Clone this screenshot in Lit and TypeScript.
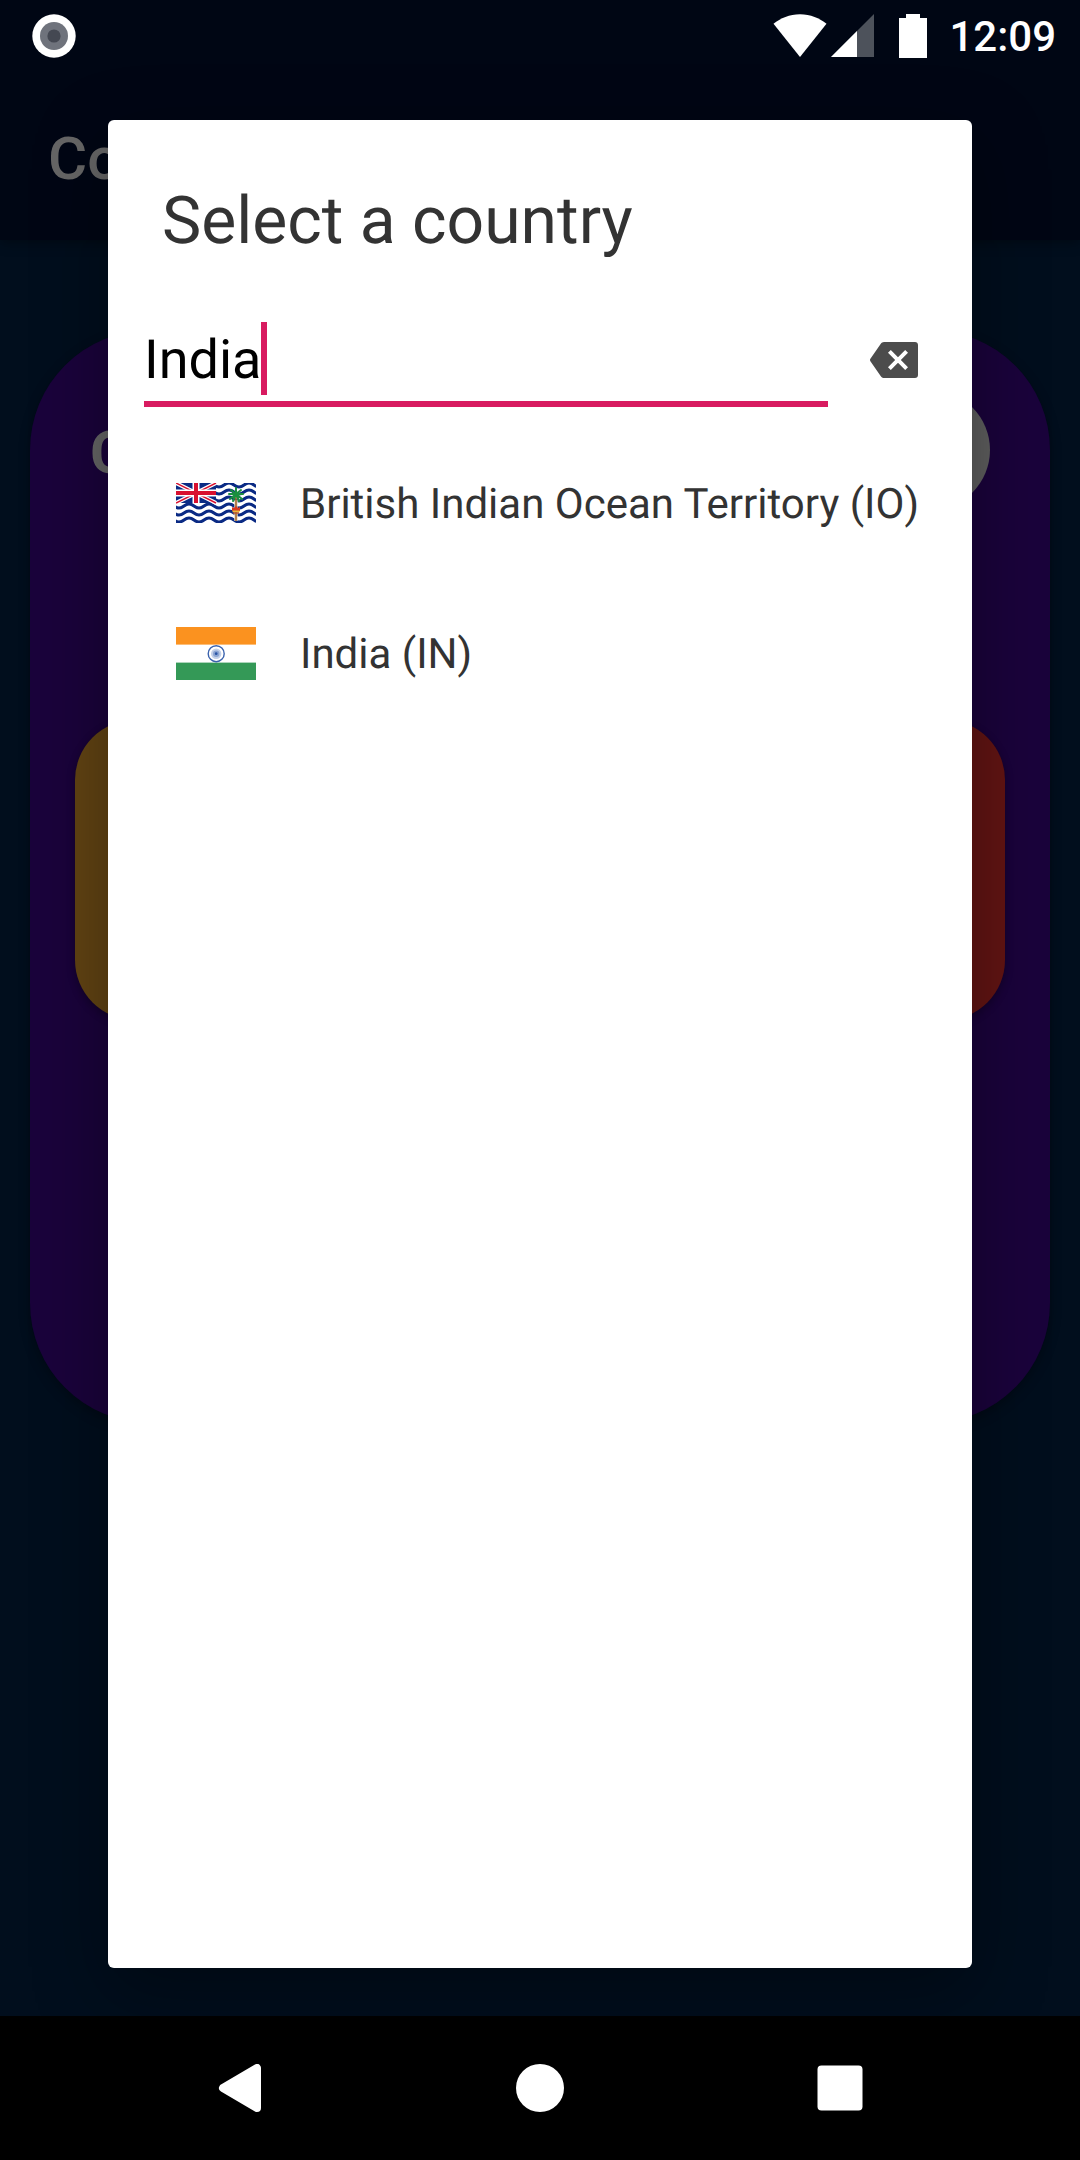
import { LitElement, html, svg, css } from "lit";
import { customElement, property, state } from "lit/decorators.js";

interface Country {
  name: string;
  code: string;
}

const COUNTRIES: Country[] = [
  { name: "British Indian Ocean Territory", code: "IO" },
  { name: "India", code: "IN" },
];

const wave = (y: number) =>
  `M-2 ${y + 1}q5 4 10 0t10 0t10 0t10 0t10 0t10 0t10 0t10 0t10 0`;

const flagIO = html`
  <svg width="80" height="40" viewBox="0 0 80 40" aria-hidden="true">
    <rect width="80" height="40" fill="#fff" />
    <g fill="none" stroke="#0a2a84" stroke-width="3">
      ${[0, 7, 14, 21, 28, 35].map((y) => svg`<path d=${wave(y + 1)} />`)}
    </g>
    <rect width="40" height="20" fill="#0a2a84" />
    <path d="M0 0L40 20M40 0L0 20" stroke="#fff" stroke-width="4" />
    <path d="M0 0L40 20M40 0L0 20" stroke="#d8102f" stroke-width="1.4" />
    <path d="M20 0V20M0 10H40" stroke="#fff" stroke-width="7" />
    <path d="M20 0V20M0 10H40" stroke="#d8102f" stroke-width="4" />
    <path d="M60 17V38" stroke="#e8dcc8" stroke-width="3.4" />
    <path d="M60 14V38" stroke="#a5692f" stroke-width="1.6" />
    <path
      d="M60 11L60 5M60 11L55 7M60 11L65 7M60 11L53 11M60 11L67 11M60 11L54 16M60 11L66 16M60 11L57 18M60 11L63 18"
      stroke="#1b8f3f" stroke-width="2" stroke-linecap="round"
    />
    <path d="M56 24l2 1 2-2 2 2 2-1v4h-8z" fill="#d8381f" />
    <path d="M56.500 27.500h7v1.800h-7z" fill="#e9b93a" />
    <path d="M57 29.300h6v1.400h-6z" fill="#b5502a" />
  </svg>
`;

const flagIN = html`
  <svg width="80" height="53" viewBox="0 0 80 53" aria-hidden="true">
    <rect width="80" height="53" fill="#fff" />
    <rect width="80" height="17.6" fill="#fb921f" />
    <rect y="35.6" width="80" height="17.4" fill="#349957" />
    <circle cx="40.2" cy="26.7" r="8" fill="#fff" stroke="#3a62ad" stroke-width="1.4" />
    <circle cx="40.2" cy="26.7" r="5.2" fill="#c3d0e8" />
    <circle cx="40.2" cy="26.7" r="3.2" fill="#8ba4d2" />
    <circle cx="40.2" cy="26.7" r="1.4" fill="#2b55a5" />
  </svg>
`;

@customElement("status-bar")
export class StatusBar extends LitElement {
  static styles = css`
    :host {
      display: flex;
      align-items: center;
      height: 72px;
      padding: 0 24px 0 32px;
      box-sizing: border-box;
      color: #fff;
      font: 500 42px/48px Roboto, "Liberation Sans", sans-serif;
    }
    svg {
      display: block;
    }
    .signals {
      display: flex;
      align-items: center;
      margin-left: auto;
    }
    .cell {
      margin: 0 25px 0 4px;
    }
    .clock {
      margin-left: 22px;
      padding-top: 2px;
    }
  `;

  render() {
    return html`
      <svg width="44" height="44" viewBox="0 0 44 44" aria-hidden="true">
        <circle cx="22" cy="22" r="21.7" fill="#fff" />
        <circle cx="22" cy="22" r="14" fill="#6f737c" />
        <circle cx="22" cy="22" r="6.6" fill="#444852" />
      </svg>
      <div class="signals">
        <svg width="54" height="44" viewBox="0 0 54 44" aria-hidden="true">
          <path d="M0.500 9.800C7.500 4 16.500 .2 27 .2S46.500 4 53.500 9.800L27 43z" fill="#fff" />
        </svg>
        <svg class="cell" width="43" height="44" viewBox="0 0 43 44" aria-hidden="true">
          <path d="M0 43L43 0V43z" fill="#4d525b" />
          <path d="M0 43L26 17V43z" fill="#fff" />
        </svg>
        <svg width="28" height="44" viewBox="0 0 28 44" aria-hidden="true">
          <path d="M7 0H21V4H28V44H0V4H7z" fill="#fff" />
        </svg>
        <time class="clock">12:09</time>
      </div>
    `;
  }
}

@customElement("backdrop-page")
export class BackdropPage extends LitElement {
  static styles = css`
    :host {
      display: flex;
      flex-direction: column;
      background: #010e1d;
      color: #666;
      font-family: Roboto, "Liberation Sans", sans-serif;
    }
    .app-bar {
      padding: 120px 48px 42px;
      background: #000614;
      box-shadow: 0 2px 12px rgba(0, 0, 0, 0.4);
    }
    h1,
    h2 {
      margin: 0;
      font-size: 60px;
      line-height: 78px;
    }
    h1 {
      font-weight: 500;
    }
    h2 {
      padding-top: 6px;
      font-weight: 700;
    }
    .card {
      margin: 90px 30px 0;
      padding: 60px 45px 403px;
      border-radius: 120px;
      background: #1a033b;
      box-shadow: 0 4px 12px rgba(0, 0, 0, 0.3);
    }
    .card-head {
      display: flex;
      align-items: center;
      justify-content: space-between;
      padding: 0 15px;
    }
    .badge {
      width: 120px;
      height: 120px;
      border-radius: 60px;
      background: #5e5e5e;
    }
    .tiles {
      display: flex;
      justify-content: space-between;
      margin-top: 210px;
    }
    .tile {
      width: 30%;
      height: 300px;
      border-radius: 60px;
      box-shadow: 0 3px 8px rgba(0, 0, 0, 0.3);
    }
    .amber {
      background: #614313;
    }
    .red {
      background: #611413;
    }
  `;

  render() {
    return html`
      <header class="app-bar"><h1>Co</h1></header>
      <section class="card">
        <div class="card-head">
          <h2>C</h2>
          <div class="badge"></div>
        </div>
        <div class="tiles">
          <div class="tile amber"></div>
          <div class="tile red"></div>
        </div>
      </section>
    `;
  }
}

@customElement("country-dialog")
export class CountryDialog extends LitElement {
  @property({ attribute: false }) countries: Country[] = [];
  @state() private query = "India";

  static styles = css`
    :host {
      display: block;
      border-radius: 6px;
      background: #fff;
      box-shadow: 0 24px 72px rgba(0, 0, 0, 0.35);
      color: #333;
      font-family: Roboto, "Liberation Sans", sans-serif;
      text-rendering: geometricPrecision;
    }
    h2 {
      margin: 0;
      padding: 60px 54px 52px;
      font-weight: 400;
      font-size: 66px;
      line-height: 84px;
    }
    .search {
      display: flex;
      align-items: flex-start;
      gap: 42px;
      padding: 0 54px 0 36px;
    }
    .field {
      display: flex;
      align-items: flex-start;
      flex: 1;
      height: 91px;
      padding-top: 6px;
      box-sizing: border-box;
      border-bottom: 6px solid #d81b60;
    }
    input {
      field-sizing: content;
      padding: 0;
      border: 0;
      outline: 0;
      background: none;
      color: #000;
      caret-color: transparent;
      height: 78px;
      font: 400 54px/78px Roboto, "Liberation Sans", sans-serif;
      text-rendering: geometricPrecision;
    }
    .caret {
      width: 6px;
      height: 73px;
      background: #d81b60;
    }
    button {
      display: block;
      border: 0;
      background: none;
      font: inherit;
      color: inherit;
      text-rendering: inherit;
      cursor: pointer;
    }
    svg {
      display: block;
      flex: none;
    }
    .clear {
      margin-top: 26px;
      padding: 0;
    }
    ul {
      margin: 21px 0 0;
      padding: 0;
      list-style: none;
    }
    .row {
      display: flex;
      align-items: center;
      gap: 44px;
      width: 100%;
      height: 150px;
      padding: 0 48px 0 68px;
      font-size: 42px;
      line-height: 54px;
      text-align: left;
      white-space: nowrap;
    }
    .label {
      padding-top: 4px;
    }
  `;

  private onInput(e: Event) {
    this.query = (e.target as HTMLInputElement).value;
  }

  private clear() {
    this.query = "";
  }

  render() {
    const q = this.query.toLowerCase();
    const rows = this.countries.filter((c) => c.name.toLowerCase().includes(q));
    return html`
      <h2>Select a country</h2>
      <div class="search">
        <div class="field">
          <input type="text" aria-label="Search" .value=${this.query} @input=${this.onInput} />
          <span class="caret"></span>
        </div>
        <button class="clear" aria-label="Clear" @click=${this.clear}>
          <svg width="48" height="36" viewBox="0 3 24 18" aria-hidden="true">
            <path
              fill="#4c4c4c"
              d="M22.500 3H7c-.69 0-1.230.35-1.590.88L.2 11.400q-.4.600 0 1.200l5.210 7.510c.36.53.9.890 1.590.890h15.500c.9 0 1.500-.6 1.500-1.500V4.500c0-.9-.6-1.500-1.500-1.500zM19 15.590L17.590 17 14 13.410 10.410 17 9 15.590 12.590 12 9 8.410 10.410 7 14 10.590 17.590 7 19 8.410 15.410 12z"
            />
          </svg>
        </button>
      </div>
      <ul>
        ${rows.map(
          (c) => html`
            <li>
              <button class="row">
                ${c.code === "IO" ? flagIO : flagIN}
                <span class="label">${c.name} (${c.code})</span>
              </button>
            </li>
          `
        )}
      </ul>
    `;
  }
}

@customElement("nav-bar")
export class NavBar extends LitElement {
  static styles = css`
    :host {
      display: block;
      background: #000;
    }
    nav {
      display: flex;
      justify-content: center;
      align-items: center;
      height: 144px;
      gap: 20%;
    }
    button {
      display: block;
      width: 84px;
      padding: 18px;
      border: 0;
      background: none;
      cursor: pointer;
    }
    svg {
      display: block;
    }
  `;

  render() {
    return html`
      <nav>
        <button aria-label="Back">
          <svg width="48" height="48" viewBox="0 0 48 48" aria-hidden="true">
            <path d="M41 4V44L7 24z" fill="#fff" stroke="#fff" stroke-width="8" stroke-linejoin="round" />
          </svg>
        </button>
        <button aria-label="Home">
          <svg width="48" height="48" viewBox="0 0 48 48" aria-hidden="true">
            <circle cx="24" cy="24" r="24" fill="#fff" />
          </svg>
        </button>
        <button aria-label="Recent apps">
          <svg width="48" height="48" viewBox="0 0 48 48" aria-hidden="true">
            <rect x="1.500" y="1.500" width="45" height="45" rx="4" fill="#fff" />
          </svg>
        </button>
      </nav>
    `;
  }
}

@customElement("app-root")
export class AppRoot extends LitElement {
  static styles = css`
    :host {
      display: grid;
      grid-template: auto 1fr auto / minmax(0, 1fr);
      min-height: 100vh;
      overflow: hidden;
    }
    backdrop-page,
    country-dialog {
      grid-area: 1 / 1 / 3 / 2;
    }
    country-dialog {
      margin: 120px 10% 48px;
      z-index: 1;
    }
    status-bar {
      grid-area: 1 / 1;
      z-index: 2;
    }
    nav-bar {
      grid-area: 3 / 1;
      z-index: 2;
    }
  `;

  render() {
    return html`
      <backdrop-page></backdrop-page>
      <country-dialog .countries=${COUNTRIES}></country-dialog>
      <status-bar></status-bar>
      <nav-bar></nav-bar>
    `;
  }
}
